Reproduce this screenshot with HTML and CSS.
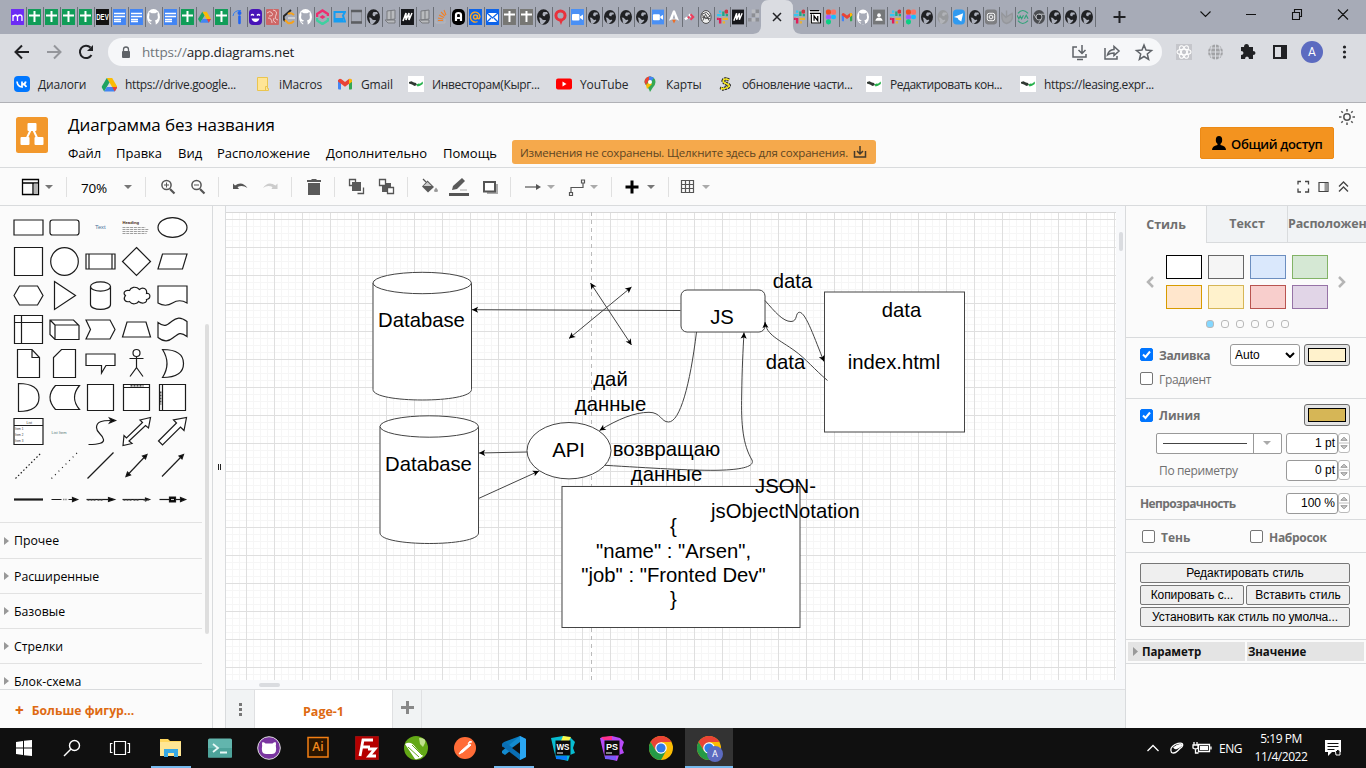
FILE: index.html
```html
<!DOCTYPE html>
<html lang="ru">
<head>
<meta charset="utf-8">
<title>Диаграмма без названия</title>
<link rel="stylesheet" href="styles.css">
</head>
<body>
<svg class="defs" width="0" height="0">
  <defs>
    <symbol id="m" viewBox="0 0 13 16"><rect width="13" height="16" fill="#6c2bf5"/><path d="M2 12V6M2 8q1-2 2.500-2t2 2v4M6.500 8q.5-2 2.500-2t2 2v4" fill="none" stroke="#fff" stroke-width="1.300"/></symbol>
    <symbol id="sheet" viewBox="0 0 13 16"><rect width="13" height="16" fill="#109d58"/><path d="M6.500 2v11M1 6.500h11" stroke="#fff" stroke-width="2"/></symbol>
    <symbol id="gsheet" viewBox="0 0 13 16"><rect width="13" height="16" fill="#777774"/><path d="M6.500 2v11M1 5.500h11" stroke="#fff" stroke-width="2"/></symbol>
    <symbol id="dev" viewBox="0 0 13 16"><rect width="13" height="16" fill="#111"/><text x="6.500" y="11.500" text-anchor="middle" font-family="Liberation Sans" font-size="9" font-weight="bold" fill="#fff" textLength="12.500" lengthAdjust="spacingAndGlyphs">DEV</text></symbol>
    <symbol id="doc" viewBox="0 0 13 16"><rect width="13" height="16" fill="#4285f4"/><path d="M1 4.500h11M1 7.500h11M1 10.500h7M1 12.500h7" stroke="#fff" stroke-width="1.300"/></symbol>
    <symbol id="gh" viewBox="0 0 13 16"><ellipse cx="6.500" cy="8" rx="6.500" ry="8" fill="#fff"/><path d="M2.500 3l2.200 1.200h3.600L10.500 3q.6 1.500 0 2.700 1.500 5-2.500 5.800.8.800.8 4.500H4.200v-2q-1.700 0-2.200-2 1.500 1 2.400.3l.6-.8Q1 10.700 2.500 5.700 2 4.500 2.500 3z" fill="#a7abb7"/></symbol>
    <symbol id="drive" viewBox="0 0 16 16"><path d="M5.300 1.500h5.400L16 10.500h-5.300z" fill="#fbbc04"/><path d="M5.300 1.500L0 10.500l2.700 4.500L8 6z" fill="#1ea362"/><path d="M5.400 10.500H16L13.300 15H2.700z" fill="#4285f4"/><path d="M10.700 10.500H16L13.300 15z" fill="#ea4335"/></symbol>
    <symbol id="ipin" viewBox="0 0 13 16"><path d="M1 7Q2 1 9 1.500" stroke="#2f7cf0" fill="none"/><circle cx="7.500" cy="4" r="2" fill="#2164f3"/><path d="M7.500 7.500V14" stroke="#2164f3" stroke-width="2.600" stroke-linecap="round"/></symbol>
    <symbol id="purple" viewBox="0 0 13 16"><rect width="13" height="16" rx="4" fill="#4713b8"/><path d="M2 6.500q1.200-2 3 0M8 6.500q1.500-2 3 0" stroke="#fff" stroke-width="1.300" fill="none"/><path d="M2.500 9.500h8q-1 3.500-4 3.500t-4-3.500z" fill="#fff"/></symbol>
    <symbol id="swirl" viewBox="0 0 13 16"><rect width="13" height="16" rx="1" fill="#ce6666"/><path d="M1 4q3-3 5 0t-3 3M7 1q5 1 3 5t2 5M2 9q4 0 4 5M8 9q-2 3 2 5" stroke="#efcaca" fill="none"/></symbol>
    <symbol id="leet" viewBox="0 0 13 16"><path d="M8 1L1 7q-1 3 1 5" stroke="#252525" stroke-width="2" fill="none"/><path d="M5 5q3-2 6 1M2 11l3 3q3 1 6-2" stroke="#f7a21b" stroke-width="2" fill="none"/><path d="M5 9h7" stroke="#ddd" stroke-width="1.500"/></symbol>
    <symbol id="hex" viewBox="0 0 13 16"><path d="M1 8V5l5.500-3.500L12 5v2" stroke="#ee2d6f" stroke-width="2.500" fill="none"/><path d="M1 9v2.500L6.500 15l5.500-3.500V9" stroke="#3fd0a0" stroke-width="2.500" fill="none"/><path d="M3.500 8L6.500 6l3 2-3 2z" fill="#ee2d6f"/></symbol>
    <symbol id="blue" viewBox="0 0 13 16"><path d="M1.500 3H12l-2 3.500 2 6H1.500z" fill="none" stroke="#159df2" stroke-width="2"/><path d="M1 9h9v4H1z" fill="#159df2"/></symbol>
    <symbol id="gbox" viewBox="0 0 13 16"><path d="M1.500 3v10h10V3" fill="none" stroke="#84868c"/><path d="M1 2h11M1 13.500h11" stroke="#5c5e62" stroke-width="2.500"/></symbol>
    <symbol id="globe" viewBox="0 0 13 16"><ellipse cx="6.500" cy="8" rx="6.500" ry="7.700" fill="#202124"/><path d="M1.500 8.500q3 0 3.500 1.500t3 1-1 3-4-1-1.500-4.500zM6.500 3h3.500l1 2-2.500.5-.5 1.700L6 7 5.500 5z" fill="#abafba"/></symbol>
    <symbol id="gglobe" viewBox="0 0 13 16"><ellipse cx="6.500" cy="8" rx="6" ry="7.500" fill="#989a9d"/><path d="M1.500 8.500q3 0 3.500 1.500t3 1-1 3-4-1-1.500-4.500zM6.500 3h3.500l1 2-2.500.5-.5 1.700L6 7 5.500 5z" fill="#b1b3b8"/></symbol>
    <symbol id="book" viewBox="0 0 13 16"><path d="M3 2l8-1v9l-8 1zM1 11h10v3H4z" fill="#b9bbbe" stroke="#77797e"/><path d="M7 2v8" stroke="#77797e"/></symbol>
    <symbol id="bm" viewBox="0 0 13 16"><rect width="13" height="16" fill="#16171b"/><path d="M2 12L5 4v7l3-7v7l3-7" stroke="#fff" stroke-width="1.500" fill="none"/></symbol>
    <symbol id="stack" viewBox="0 0 13 16"><path d="M1 10v4h9v-4" stroke="#b8b8bc" fill="none"/><path d="M3 11.500h5M3 9l5 1M4 6l5 2.500M6 3l4 4M9 1l2 5" stroke="#f48024" stroke-width="1.100"/></symbol>
    <symbol id="blacka" viewBox="0 0 13 16"><rect width="13" height="16" rx="5" fill="#000"/><path d="M4 12V6q0-2 2.500-2T9 6v6M4 9h5" stroke="#fff" stroke-width="2.200" fill="none"/></symbol>
    <symbol id="at" viewBox="0 0 13 16"><rect width="13" height="16" fill="#0c63ea"/><circle cx="6.500" cy="8" r="2" fill="none" stroke="#f9a825" stroke-width="1.400"/><path d="M8.500 6v3q2 2 2.500-1.500A4.800 5 0 1 0 8.500 12.500" fill="none" stroke="#f9a825" stroke-width="1.400"/></symbol>
    <symbol id="mail" viewBox="0 0 13 16"><rect width="13" height="16" fill="#0c63ea"/><rect x="1" y="4" width="11" height="9" fill="#fff"/><path d="M1 4l5.500 5L12 4M1 13l4-4M12 13L8 9" stroke="#0c63ea" stroke-width="1.300" fill="none"/></symbol>
    <symbol id="rpin" viewBox="0 0 13 16"><path d="M5 11L7 16l2-5" fill="#e8323c"/><circle cx="6.500" cy="6.500" r="4.600" fill="none" stroke="#e8323c" stroke-width="3"/></symbol>
    <symbol id="zoom" viewBox="0 0 13 16"><rect width="13" height="16" fill="#4a90f5"/><rect x="1" y="5" width="7.500" height="6.500" rx="1" fill="#fff"/><path d="M9 7.500L12 5.500v5.500L9 9z" fill="#fff"/></symbol>
    <symbol id="rocket" viewBox="0 0 13 16"><path d="M5.500 1h2L12 12q-5-3-11 0z" fill="#fff"/><path d="M4.500 11h4L6.500 15z" fill="#ef6b22"/><path d="M6.500 5L5 10h3z" fill="#a7abb7"/></symbol>
    <symbol id="rdots" viewBox="0 0 13 16"><path d="M1 10.500l3-2M5.500 5l2 2" stroke="#fff" stroke-width="2.500"/><path d="M4 9l2-1M7 5l3 3-3 3" stroke="#ef3b5b" stroke-width="2.200" fill="none"/></symbol>
    <symbol id="knot" viewBox="0 0 13 16"><ellipse cx="6.500" cy="8" rx="5.500" ry="7" fill="#eee" stroke="#444"/><path d="M2 5l5-2 4 4-5 3zM3 12l3-7 4 7M2 8l9 2" stroke="#444" fill="none"/></symbol>
    <symbol id="slack" viewBox="0 0 13 16"><path d="M4.500 1v2.500M1 6h5" stroke="#36c5f0" stroke-width="2.600"/><path d="M8 2v5M10.500 6H13" stroke="#20a883" stroke-width="2.600"/><path d="M4.500 9v6M1 10h2" stroke="#e01e5a" stroke-width="2.600"/><path d="M7 10h6M8.500 12.500V15" stroke="#ecb22e" stroke-width="2.600"/><circle cx="11.300" cy="2.200" r="2.200" fill="#cf3640"/></symbol>
    <symbol id="gray4" viewBox="0 0 13 16"><path d="M4 4h4v4H4zM8 0h4v4H8zM0 9h4v4H0zM8 9h4v4H8z" fill="#8d8f94"/><path d="M8 4h4v4H8zM4 9h4v4H4zM4 0h4v4H4z" fill="#b9bbc0"/></symbol>
    <symbol id="notion" viewBox="0 0 13 16"><path d="M0 1h11l2 2v12H1z" fill="#fff"/><path d="M1 4h12M1 1h10M2.500 5v9.500h10V4.500M5.500 12V7l4 5V7" stroke="#000" stroke-width="1.300" fill="none"/></symbol>
    <symbol id="figma" viewBox="0 0 13 16"><rect x="1" y="0" width="5.500" height="5.500" rx="2" fill="#f24e1e"/><rect x="6.500" y="0" width="5.500" height="5.500" rx="2" fill="#ff7262"/><rect x="1" y="5.500" width="5.500" height="5" rx="2" fill="#a259ff"/><rect x="6.500" y="5.500" width="5.500" height="5" rx="2.500" fill="#1abcfe"/><rect x="1" y="10.500" width="5.500" height="5.500" rx="2.500" fill="#0acf83"/></symbol>
    <symbol id="gmail" viewBox="0 0 16 16"><path d="M1 4h3v9.500H2q-1 0-1-1z" fill="#4285f4"/><path d="M12 4h3v8.500q0 1-1 1h-2z" fill="#34a853"/><path d="M1 4.500Q2 2 4.500 3.200L8 6l3.500-2.800Q14 2 15 4.500V5.500L8 10.800 1 5.500z" fill="#ea4335"/><path d="M12 3q2.500-.7 3 1.500v1.200l-3 2.300z" fill="#fbbc04"/></symbol>
    <symbol id="person" viewBox="0 0 13 16"><rect width="13" height="16" fill="#757779"/><circle cx="6.500" cy="6" r="2" fill="#fff"/><path d="M2.500 12q1-3.500 4-3.500t4 3.500z" fill="#fff"/></symbol>
    <symbol id="tg" viewBox="0 0 13 16"><rect width="13" height="16" rx="4" fill="#2f9af0"/><path d="M1 8l10-4-2 9-3-2-1-2z" fill="#fff"/></symbol>
    <symbol id="insta" viewBox="0 0 13 16"><rect width="13" height="16" rx="3" fill="#7e7f82"/><rect x="2.500" y="4" width="8" height="8" rx="2" fill="none" stroke="#fff"/><circle cx="6.500" cy="8" r="2" fill="none" stroke="#fff"/></symbol>
    <symbol id="gswirl" viewBox="0 0 13 16"><path d="M6 1v7l6-4q2 9-6 11Q0 14 1 4l5 5" stroke="#95979c" stroke-width="1.500" fill="#a1a3a8"/></symbol>
    <symbol id="wa" viewBox="0 0 13 16"><path d="M1 4Q6-2 12 4M1 12q5 6 11 0M0 6l2 4 1.500-3L5 10l2-4M8 10l2-4 2 4" fill="none" stroke="#32a279" stroke-width="1.200"/></symbol>
    <symbol id="dchrome" viewBox="0 0 13 16"><ellipse cx="6.500" cy="8" rx="6.500" ry="7.500" fill="#4b4d51"/><circle cx="6.500" cy="8" r="3.200" fill="#303236" stroke="#bdbfc3"/><path d="M6.500 5H13M4 10L1 5M9 10l-3 5" stroke="#bdbfc3"/></symbol>
    <symbol id="chev" viewBox="0 0 8 8"><path d="M0 2h8L4 6z"/></symbol>
    <symbol id="leaf" viewBox="0 0 16 16"><rect width="16" height="16" fill="#fff"/><path d="M1 6l2.500-.8L6 6.500 8 7l1 2-2.500 1L4 8.500 1 7.500z" fill="#303833"/><path d="M8.500 8.500l2-1 1.500.3L14.800 5.500V8L12 9.800l-2.500.7z" fill="#25b14b"/></symbol>
    <symbol id="chrome" viewBox="-12 -12 24 24"><circle r="12" fill="#fbbc04"/><path d="M-10.400-6A12 12 0 0 1 10.400-6H0L-5 3z" fill="#ea4335"/><path d="M-10.400-6A12 12 0 0 0 0 12L5 3-5 3z" fill="#259a46"/><circle r="5.800" fill="#fff"/><circle r="4.600" fill="#317be8"/></symbol>
    <marker id="end" viewBox="-8 -4 9 8" markerWidth="8" markerHeight="7" markerUnits="userSpaceOnUse" refX="0" refY="0" orient="auto-start-reverse"><path d="M0 0L-7-3.500-5.300 0-7 3.500z"/></marker>
    <pattern id="grid" width="28" height="28" patternUnits="userSpaceOnUse" x="20" y="7">
      <path d="M7.500 0v28M14.500 0v28M21.500 0v28M0 7.500h28M0 14.500h28M0 21.500h28" stroke="#f6f6f6"/>
      <path d="M.5 0v28M0 .5h28" stroke="#dfdfdf"/>
    </pattern>
  </defs>
</svg>

<header class="browser">
  <div class="tabstrip">
    <div class="tabs tabs-a">
      <svg><use href="#m"/></svg><svg><use href="#sheet"/></svg><svg><use href="#sheet"/></svg><svg><use href="#sheet"/></svg><svg><use href="#sheet"/></svg><svg><use href="#dev"/></svg><svg><use href="#doc"/></svg><svg><use href="#doc"/></svg><svg><use href="#gh"/></svg><svg><use href="#doc"/></svg><svg><use href="#sheet"/></svg><svg><use href="#drive"/></svg><svg><use href="#sheet"/></svg><svg><use href="#ipin"/></svg><svg><use href="#purple"/></svg><svg><use href="#swirl"/></svg><svg><use href="#leet"/></svg><svg><use href="#gh"/></svg><svg><use href="#hex"/></svg><svg><use href="#blue"/></svg><svg><use href="#gbox"/></svg><svg><use href="#globe"/></svg><svg><use href="#book"/></svg><svg><use href="#bm"/></svg><svg><use href="#book"/></svg><svg><use href="#stack"/></svg><svg><use href="#blacka"/></svg><svg><use href="#at"/></svg><svg><use href="#mail"/></svg><svg><use href="#gsheet"/></svg><svg><use href="#gsheet"/></svg><svg><use href="#globe"/></svg><svg><use href="#rpin"/></svg><svg><use href="#zoom"/></svg>
    </div>
    <div class="tabs tabs-b">
      <svg><use href="#globe"/></svg><svg><use href="#globe"/></svg><svg><use href="#globe"/></svg><svg><use href="#globe"/></svg><svg><use href="#zoom"/></svg><svg><use href="#rocket"/></svg><svg><use href="#rdots"/></svg><svg><use href="#knot"/></svg><svg><use href="#slack"/></svg><svg><use href="#bm"/></svg><svg class="last"><use href="#gray4"/></svg>
    </div>
    <svg class="active-tab" width="48" height="34"><path d="M0 34q8-1 8-8V8q0-8 8-8h16q8 0 8 8v18q0 7 8 8z" fill="#dadce1"/><path d="M20 13l8 8M28 13l-8 8" stroke="#202124" stroke-width="1.500"/></svg>
    <div class="tabs tabs-c">
      <svg><use href="#slack"/></svg><svg><use href="#notion"/></svg><svg><use href="#figma"/></svg><svg><use href="#gmail"/></svg><svg><use href="#gh"/></svg><svg><use href="#person"/></svg><svg><use href="#slack"/></svg><svg><use href="#figma"/></svg><svg><use href="#globe"/></svg><svg><use href="#gglobe"/></svg><svg><use href="#tg"/></svg><svg><use href="#globe"/></svg><svg><use href="#insta"/></svg><svg><use href="#gswirl"/></svg><svg><use href="#wa"/></svg><svg><use href="#dchrome"/></svg><svg><use href="#globe"/></svg><svg><use href="#globe"/></svg><svg><use href="#globe"/></svg>
    </div>
    <svg class="window-buttons" width="254" height="34" fill="none" stroke="#111">
      <path d="M1.500 17h12M7.500 11v12" stroke="#202124" stroke-width="2"/>
      <path d="M88.500 11.500l5 5 5-5M134 14.500h10M180.500 12.500h7v7h-7zM182.500 12v-2.500h7v7H188M226 9.500l10 10M236 9.500l-10 10" stroke-width="1.100"/>
    </svg>
  </div>
  <div class="addressbar">
    <svg width="108" height="36" fill="none" stroke="#202124" stroke-width="2"><path d="M29 18H16M22 11.500L15.500 18l6.500 6.500"/><path d="M47 18h13M54 11.500l6.500 6.500-6.500 6.500" stroke="#94969b"/><path d="M91.500 21a6.200 6.200 0 1 1-1-7.500"/><path d="M93 11v6h-6z" fill="#202124" stroke="none"/></svg>
    <div class="omnibox">
      <svg width="10" height="13"><rect x="1" y="5" width="8" height="7" rx="1" fill="#5f6368"/><path d="M2.500 6V3.500a2.500 2.500 0 0 1 5 0V6" fill="none" stroke="#5f6368" stroke-width="1.300"/></svg>
      <span class="url"><i>https://</i>app.diagrams.net</span>
      <svg class="omni-icons" width="84" height="20" fill="none" stroke="#5f6368" stroke-width="1.500"><path d="M6 5H2v10h13v-3M6 17.500h6M11 3v8M7.500 8L11 11.500 14.500 8"/><path d="M34 6v11h12v-3M36.500 13q1-5 6.500-5.500V4.500L48 9l-5 4.500V11q-4 0-6.500 2z"/><path d="M73 3l2 5 5.500.500-4.200 3.500 1.300 5.300L73 14.500l-4.600 2.800 1.300-5.300L65.500 8.500 71 8z"/></svg>
    </div>
    <svg width="194" height="36"><rect x="4" y="10" width="16" height="16" fill="#c5c6cb"/><g fill="none" stroke="#fff" stroke-width="1.100"><ellipse cx="12" cy="18" rx="7" ry="2.700"/><ellipse cx="12" cy="18" rx="7" ry="2.700" transform="rotate(60 12 18)"/><ellipse cx="12" cy="18" rx="7" ry="2.700" transform="rotate(120 12 18)"/></g><circle cx="43.500" cy="18" r="7.500" fill="#a2a3a6"/><path d="M36 18h15M37 14h13M37 22h13M43.500 10v16M40 11q-3 7 0 14M47 11q3 7 0 14" stroke="#dadce1" fill="none"/><path d="M69 13h3q0-3 2.500-3t2.500 3h4v4q2.500 0 2.500 2T81 21v4h-4q0-2.500-2-2.500T73 25h-4v-4q2.500 0 2.500-2T69 17z" fill="#202124"/><path d="M102 12h12v12h-12z" fill="none" stroke="#202124" stroke-width="2"/><path d="M109 12h5v12h-5z" fill="#202124"/><circle cx="140" cy="18" r="11" fill="#5c6bc0"/><text x="140" y="22.200" text-anchor="middle" font-family="Roboto" font-size="12" fill="#fff">A</text><g fill="#202124"><circle cx="172.500" cy="13" r="1.600"/><circle cx="172.500" cy="18" r="1.600"/><circle cx="172.500" cy="23" r="1.600"/></g></svg>
  </div>
  <nav class="bookmarks">
    <a class="b1"><svg viewBox="0 0 16 16"><rect width="16" height="16" rx="4" fill="#0077ff"/><path d="M3 5.500q.5 5 5 5.500V5.500M8.300 8.500q3-.5 3.500-3M8.300 8.200q3 .3 4 2.800" fill="none" stroke="#fff" stroke-width="1.700"/></svg><span>Диалоги</span></a>
    <a class="b2"><svg viewBox="-.5 -.5 17 17"><use href="#drive"/></svg><span>https://drive.google...</span></a>
    <a class="b3"><svg viewBox="0 0 16 16"><path d="M2.500 1.500h10v11h1v2h-11z" fill="#ffe596" stroke="#eac54f"/><path d="M10.500 14v-3.500h2" stroke="#eac54f" fill="none"/></svg><span>iMacros</span></a>
    <a class="b4"><svg><use href="#gmail"/></svg><span>Gmail</span></a>
    <a class="b5"><svg><use href="#leaf"/></svg><span>Инвесторам(Кырг...</span></a>
    <a class="b6"><svg viewBox="0 0 16 16"><rect y="2.500" width="16" height="11" rx="2" fill="#f00"/><path d="M6.500 5.500v5l4-2.500z" fill="#fff"/></svg><span>YouTube</span></a>
    <a class="b7"><svg viewBox="0 0 16 16"><path d="M2.500 6a5.500 5.500 0 0 1 11 0q0 3-3 6L8 16q-.5-2-2.500-5-3-3-3-5z" fill="#34a853"/><path d="M2.500 6A5.500 5.500 0 0 1 9 .5L4 9q-1.500-2-1.500-3z" fill="#ea4335"/><path d="M7 .5q3-.5 5 1.500L7 8z" fill="#4285f4"/><path d="M4 9l3-3 3 2-5 5z" fill="#fbbc04"/><circle cx="8" cy="6" r="2" fill="#fff"/></svg><span>Карты</span></a>
    <a class="b8"><svg viewBox="0 0 16 16"><path d="M11 4Q7 2 5.500 4t3.500 4-1 4-4-.5" fill="none" stroke="#222" stroke-width="3.600" stroke-dasharray="2 .6"/><path d="M11 4Q7 2 5.500 4t3.500 4-1 4-4-.5" fill="none" stroke="#f6e81c" stroke-width="1.600"/></svg><span>обновление части...</span></a>
    <a class="b9"><svg><use href="#leaf"/></svg><span>Редактировать кон...</span></a>
    <a class="b10"><svg><use href="#leaf"/></svg><span>https://leasing.expr...</span></a>
  </nav>
</header>

<div class="app-header">
  <svg class="logo" width="32" height="36"><rect width="32" height="36" rx="2.500" fill="#f2982c"/><path d="M16 10L9 25M16 10l7 15" stroke="#fff" stroke-width="2"/><g fill="#fff"><rect x="11.500" y="6" width="9" height="8" rx="1"/><rect x="4.500" y="20" width="9" height="8" rx="1"/><rect x="18.500" y="20" width="9" height="8" rx="1"/></g></svg>
  <div class="heading">
    <div class="title">Диаграмма без названия</div>
    <div class="menu">
      <span class="m1">Файл</span><span class="m2">Правка</span><span class="m3">Вид</span><span class="m4">Расположение</span><span class="m5">Дополнительно</span><span class="m6">Помощь</span>
      <div class="status"><span>Изменения не сохранены. Щелкните здесь для сохранения.</span><svg width="14" height="14" fill="none" stroke="#443a2b" stroke-width="1.500"><path d="M1.500 6v6h11V6M7 1v8M4 6l3 3 3-3"/></svg></div>
    </div>
  </div>
  <button class="share"><svg width="14" height="14"><ellipse cx="7" cy="4" rx="3.200" ry="4"/><path d="M5.500 6h3v3q5.500 1 5.500 5H0q0-4 5.500-5z"/></svg><span>Общий доступ</span></button>
  <svg class="sun" width="18" height="18" fill="none" stroke="#555" stroke-width="1.500"><circle cx="9" cy="9" r="3.200"/><path d="M9 1v2.500M9 14.500V17M1 9h2.500M14.500 9H17M3.300 3.300l1.500 1.500M13.200 13.200l1.500 1.500M14.700 3.300l-1.500 1.500M4.800 13.200l-1.500 1.500"/></svg>
</div>

<div class="toolbar">
  <div class="group g1"><svg class="ic" viewBox="-15 -15 30 30"><path d="M-7.500-7.500h16v15h-16zM-7.500-4h16M3-4V7.500" fill="none" stroke="#000" stroke-width="1.300"/><path d="M4-3.300h4V7H4z" fill="#b5b5b5"/></svg><svg class="caret"><use href="#chev"/></svg></div>
  <div class="group g2"><span>70%</span><svg class="caret"><use href="#chev"/></svg></div>
  <div class="group g3">
    <svg class="ic" viewBox="-15 -15 30 30" fill="none" stroke="#555" stroke-width="1.500"><circle cx="-1.500" cy="-2" r="4.600"/><path d="M2 2l4.500 4.500" stroke-width="2.200"/><path d="M-4-2h5M-1.500-4.500v5" stroke-width="1"/></svg>
    <svg class="ic" viewBox="-15 -15 30 30" fill="none" stroke="#555" stroke-width="1.500"><circle cx="-1.500" cy="-2" r="4.600"/><path d="M2 2l4.500 4.500" stroke-width="2.200"/><path d="M-4-2h5" stroke-width="1"/></svg>
  </div>
  <div class="group g4">
    <svg class="ic" viewBox="-15 -15 30 30"><path d="M-7-3.500l2 2q7-5 12.500 2.500-5-3.500-10-1L-1 2h-6z" fill="#555"/></svg>
    <svg class="ic" viewBox="-15 -15 30 30"><path d="M7.500-3.500l-2 2Q-2-6.500-7 1q4.500-3.500 9.500-1L1.500 2h6z" fill="#ccc"/></svg>
  </div>
  <div class="group g5"><svg class="ic" viewBox="-15 -15 30 30" fill="#5a5a5a"><path d="M-7-7h4l1-1h4l1 1h4v2H-7zM-6-4H6V8H-6z"/></svg></div>
  <div class="group g6">
    <svg class="ic" viewBox="-15 -15 30 30"><path d="M-6.500-7.500h6v6h-6zM1.500 6.500h6v-6" fill="none" stroke="#555" stroke-width="1.300"/><rect x="-4" y="-5" width="9" height="9" fill="#5a5a5a"/></svg>
    <svg class="ic" viewBox="-15 -15 30 30"><rect x="-4" y="-4" width="9" height="9" fill="#5a5a5a"/><path d="M-6.500-7.500h6v6h-6zM1.500.5h6v6h-6z" fill="#fff" stroke="#555" stroke-width="1.300"/></svg>
  </div>
  <div class="group g7">
    <svg class="ic" viewBox="-15 -15 30 30"><path d="M-6-8l3 3" stroke="#555" stroke-width="1.300"/><path d="M-1.500-6.500L5 0-1 5.500-7-.5z" fill="#5a5a5a"/><path d="M-1.500-5L-5.500-1h8z" fill="#ccc"/><path d="M7 .5q4 4.500 0 4.500t0-4.500z" fill="#999"/></svg>
    <svg class="ic" viewBox="-15 -15 30 30"><path d="M-7 3l1-4L3-9l3 3-8 8z" fill="#5a5a5a"/><path d="M1 3h7" stroke="#aaa"/><rect x="-10" y="6" width="20" height="3" fill="#555"/></svg>
    <svg class="ic" viewBox="-15 -15 30 30"><rect x="-2" y="-3" width="11" height="10" fill="#aaa"/><rect x="-5" y="-5" width="11" height="9.500" fill="#fff" stroke="#555" stroke-width="2"/></svg>
  </div>
  <div class="group g8">
    <svg class="ic" viewBox="-15 -15 30 30"><path d="M-7 0H6" stroke="#555" stroke-width="1.200"/><path d="M4-3l5 3-5 3z" fill="#555"/></svg><svg class="caret light"><use href="#chev"/></svg>
    <svg class="ic" viewBox="-15 -15 30 30" fill="none" stroke="#555" stroke-width="1.200"><path d="M-6 5V.5H6V-4M-7.500 5.500h3v3h-3zM4.500-7h3v3h-3z"/></svg><svg class="caret light"><use href="#chev"/></svg>
  </div>
  <div class="group g9"><svg class="ic" viewBox="-15 -15 30 30"><path d="M-6.500 0h13M0-6.500v13" stroke="#000" stroke-width="3"/></svg><svg class="caret dark"><use href="#chev"/></svg></div>
  <div class="group g10"><svg class="ic" viewBox="-15 -15 30 30"><path d="M-5.500-6.500h12v12h-12zM-1.500-6.500v12M2.500-6.500v12M-5.500-2.500h12M-5.500 1.500h12" fill="none" stroke="#555" stroke-width="1.200"/></svg><svg class="caret light"><use href="#chev"/></svg></div>
  <svg class="view-icons" width="60" height="20" fill="none" stroke="#444" stroke-width="1.300"><path d="M5 7.500V4.500H8M12 4.500h3.500v3M15.500 11.500v3.500H12M8 15H5v-3.500"/><path d="M26 5.500h9v9h-9z" stroke-width="1.200"/><path d="M31.500 6h3v8h-3z" fill="#999" stroke="none"/><path d="M46 9.500L50.500 5 55 9.500M46 14.500l4.500-4.500 4.500 4.500"/></svg>
</div>

<main class="workspace">
  <aside class="sidebar">
    <div class="sidebar-scroll">
      <div class="palette">
        <svg><path d="M-14.500-7.500h29v15h-29z"/></svg>
        <svg><rect x="-14.500" y="-7.500" width="29" height="15" rx="2.500"/></svg>
        <svg><text x="-5.500" y="1.500" font-size="5.800" stroke="none" fill="#47709a">Text</text></svg>
        <svg><text x="-14" y="-3.500" font-size="4.200" font-weight="bold" stroke="none" fill="#421">Heading</text><path d="M-14 0H9M-14 2H12M-14 4H11M-14 6H10" stroke="#888" stroke-width=".8" stroke-dasharray="3 .8"/></svg>
        <svg><ellipse rx="14.500" ry="9.800"/></svg>
        <svg><path d="M-14-14h28v28h-28z"/></svg>
        <svg><circle r="13.800"/></svg>
        <svg><path d="M-14.500-7.500h29v15h-29zM-11.500-7.500v15M11.500-7.500v15"/></svg>
        <svg><path d="M0-14L14 0 0 14-14 0z"/></svg>
        <svg><path d="M-10-7.500h24.500L10 7.500h-24.500z"/></svg>
        <svg><path d="M-14.500 0L-9-9.500H9L14.500 0 9 9.500H-9z"/></svg>
        <svg><path d="M-10-14L11 0-10 14z"/></svg>
        <svg><path d="M-10-9V9C-10 15.500 10 15.500 10 9V-9"/><ellipse cy="-9" rx="10" ry="4.700"/></svg>
        <svg><path d="M-7-5C-12-6-14-2-11 0c-3 4 0 7 4 6 3 4 8 2 9 0 4 3 9 1 8-2 5-1 4-7 0-6C11-7 6-9 3-6-1-10-6-8-7-5z"/></svg>
        <svg><path d="M-14.500-9.500h29v17Q7 3 0 7.500T-14.500 7.500z"/></svg>
        <svg><path d="M-14-14h28v28h-28zM-7-14v28M-14-7h28"/></svg>
        <svg><path d="M-14.500-9.500H9l5.500 5.500v14h-24l-5-5zM-9.500 10V-4.500h24M-14.500-9.500l5 5"/></svg>
        <svg><path d="M-14.500-9.500H9.500L14.500 0 9.500 9.500h-24L-10 0z"/></svg>
        <svg><path d="M-9.500-7.500H9.500L14 7.500h-28z"/></svg>
        <svg><path d="M-14.500-7C-8-2-6-4-1-8S8-13 14.500-8V7C8 2 6 4 1 8S-8 13-14.500 8z"/></svg>
        <svg><path d="M-11-14H3.500L11-6v20h-22zM3.500-14v8H11"/></svg>
        <svg><path d="M-3-14h14v28h-22V-6z"/></svg>
        <svg><path d="M-14.500-9.500h29V2h-9L1 9.500V2h-15.500z"/></svg>
        <svg><circle cy="-10.500" r="3.500"/><path d="M0-7V4l-6.500 9M0 4l6.500 9M-7-5H7"/></svg>
        <svg><path d="M-10-14Q11-14 11 0T-10 14Q-1 0-10-14z"/></svg>
        <svg><path d="M-10-14Q10.500-14 10.500 0T-10 14z"/></svg>
        <svg><path d="M-9-12h24Q5 0 15 12H-9Q-20 0-9-12z"/></svg>
        <svg><path d="M-13-13h26v26h-26z"/></svg>
        <svg><path d="M-13-13h26v26h-26zM-13-10h26"/><path d="M-6-11.700H7" stroke-dasharray="2 1"/></svg>
        <svg><path d="M-13-13h26v26h-26zM-10-13v26"/><path d="M-11.700-6V7" stroke-dasharray="2 1"/></svg>
        <svg><path d="M-14.500-13h29v26h-29zM-14.500-6h29"/><text x="-2" y="-8" font-size="3.500" stroke="none" fill="#333">List</text><g font-size="3" stroke="none" fill="#333"><text x="-13.500" y="-2">Item 1</text><text x="-13.500" y="4">Item 2</text><text x="-13.500" y="10">Item 3</text></g></svg>
        <svg><text x="-13" y="2" font-size="4" stroke="none" fill="#577">List Item</text></svg>
        <svg><path d="M-12 13q16 0 15-5c-1-6-7-6-7-12 0-6 6-7 14-7"/><path d="M9-13.500l6 2.500-6 2.500 1.500-2.500z" fill="#000"/></svg>
        <svg><path d="M-13.500 14l1-10 2.500 2.500L6-9 3.500-11.500 14-14l-2 10.500-3-2.500L-7.500 9.500l3 2.500z"/></svg>
        <svg><path d="M-14 9.500L4-8.500 1-11.500 14-14l-2.500 13-3.500-3.500-18 18z"/></svg>
        <svg><path d="M-13 13L13-13" stroke-dasharray="1.500 2.200"/></svg>
        <svg><path d="M-13 13L13-13" stroke-dasharray="1 4"/></svg>
        <svg><path d="M-13 13L13-13"/></svg>
        <svg><path d="M-8.500 9L8.500-9"/><path d="M-10.500 11l1.500-4.500 3 3zM10.500-11l-4.500 1.500 3 3z" fill="#000"/></svg>
        <svg><path d="M-10.500 11L9-9"/><path d="M11-11l-4.500 1.500 3 3z" fill="#000"/></svg>
        <svg><path d="M-14.500 0h29" stroke-width="2.200"/></svg>
        <svg><path d="M-13 0h10M4 0h6"/><path d="M8-2l5 2-5 2z" fill="#000"/><path d="M-1.500 0H3" stroke="#888" stroke-width="1.500" stroke-dasharray="1.500 .7"/></svg>
        <svg><path d="M-14 0H9"/><path d="M8-2l6 2-6 2z" fill="#000"/><path d="M-13 .8h8M-3 .8H3" stroke="#777" stroke-dasharray="2 1"/></svg>
        <svg><path d="M-14 0H12"/><path d="M9-1.500l4 1.500-4 1.500z" fill="#000"/><path d="M-13 .8h8M-3 .8H3M7 .8h6" stroke="#777" stroke-dasharray="2 1"/></svg>
        <svg><path d="M-13 0H9"/><path d="M8-2l5 2-5 2zM-3-2.500h6v5h-6z" fill="#000"/><path d="M-1.500 0H1.500" stroke="#ccc"/></svg>
      </div>
      <div class="section s1"><svg><path d="M0 0l5 4-5 4z"/></svg>Прочее</div>
      <div class="section"><svg><path d="M0 0l5 4-5 4z"/></svg>Расширенные</div>
      <div class="section"><svg><path d="M0 0l5 4-5 4z"/></svg>Базовые</div>
      <div class="section"><svg><path d="M0 0l5 4-5 4z"/></svg>Стрелки</div>
      <div class="section"><svg><path d="M0 0l5 4-5 4z"/></svg>Блок-схема</div>
      <div class="side-thumb"></div>
    </div>
    <div class="more-shapes"><b>+</b><span>Больше фигур...</span></div>
  </aside>
  <div class="splitter"><i></i><i></i></div>

  <section class="editor">
    <div class="canvas">
      <svg class="diagram" width="890" height="468" viewBox="0 0 890 468">
        <rect width="890" height="468" fill="#fff"/>
        <rect width="890" height="468" fill="url(#grid)"/>
        <path d="M0 .5h890" stroke="#d8d8d8"/>
        <path d="M365.500 0v468" stroke="#bbb" stroke-dasharray="4 4"/>
        <g transform="translate(-226 -212)" fill="#fff" stroke="#444" stroke-width="1">
          <path d="M373 283v106.500c0 14 98.500 14 98.500 0V283"/><ellipse cx="422.200" cy="283" rx="49.200" ry="10.700"/>
          <path d="M380 426.500V533c0 14 98.500 14 98.500 0V426.500"/><ellipse cx="429.200" cy="426.500" rx="49.200" ry="10.700"/>
          <rect x="681" y="290" width="84" height="42" rx="6"/>
          <rect x="824.500" y="292" width="140" height="140"/>
          <ellipse cx="569" cy="450.700" rx="42" ry="28.200"/>
          <rect x="562" y="486.500" width="238" height="141"/>
          <g fill="none">
            <path d="M680.500 310.500L472 309.700" marker-end="url(#end)"/>
            <path d="M631.500 287L569 338.500" marker-start="url(#end)" marker-end="url(#end)"/>
            <path d="M590.500 283L631.500 345" marker-start="url(#end)" marker-end="url(#end)"/>
            <path d="M527 452L479 453" marker-end="url(#end)"/>
            <path d="M478.500 498.500L539 471" marker-end="url(#end)"/>
            <path d="M696.500 332C690 385 680 422 668.500 422 661 422 661 412.300 649 412.300 635 412.300 618 419 599.500 430.500" marker-end="url(#end)"/>
            <path d="M605 465.300C650 468 690 470.500 715 470.300 740 470 755 467 752 460 743 445 741 425 741.700 395 742 370 743 350 744 332.500" marker-end="url(#end)"/>
            <path d="M765 300.500C775 312 783 321.500 791 321.500 798 321.500 795 312.300 799.500 312.300 806 312.300 815 340 824 361.500" marker-end="url(#end)"/>
            <path d="M827.500 380.500C815 370 805 358 795 351 780 340 766 335 765 322" marker-end="url(#end)"/>
          </g>
        </g>
        <g class="labels" transform="translate(-226 -212)">
          <text x="421.500" y="327">Database</text><text x="428.500" y="471">Database</text>
          <text x="610.500" y="386">дай</text><text x="610.500" y="411">данные</text>
          <text x="568.500" y="457">API</text><text x="722" y="324">JS</text>
          <text x="666.500" y="456">возвращаю</text><text x="666.500" y="481">данные</text>
          <text x="792.500" y="288">data</text><text x="785.500" y="369">data</text><text x="901.500" y="317">data</text>
          <text x="894" y="369">index.html</text>
          <text x="785.500" y="493">JSON-</text><text x="785.500" y="518">jsObjectNotation</text>
          <text x="673.500" y="533">{</text><text x="673.500" y="557.500">"name" : "Arsen",</text><text x="673.500" y="582">"job" : "Fronted Dev"</text><text x="673.500" y="606">}</text>
        </g>
      </svg>
      <div class="v-track"><i></i></div>
      <div class="h-track"><i></i></div>
    </div>
    <div class="page-tabs">
      <div class="page-menu"><i></i><i></i><i></i></div>
      <div class="page-tab">Page-1</div>
      <div class="page-add"><svg width="13" height="13"><path d="M0 6.500h13M6.500 0v13" stroke="#888" stroke-width="3"/></svg></div>
    </div>
  </section>

  <aside class="format">
    <div class="format-tabs"><b class="current">Стиль</b><b>Текст</b><b class="clip">Расположен</b></div>
    <div class="styles">
      <svg class="nav" width="8" height="12"><path d="M7 1L2 6l5 5" fill="none" stroke="#b5b5b5" stroke-width="2.500"/></svg>
      <div class="swatches"><i class="w1"></i><i class="w2"></i><i class="w3"></i><i class="w4"></i><i class="w5"></i><i class="w6"></i><i class="w7"></i><i class="w8"></i></div>
      <svg class="nav" width="8" height="12"><path d="M1 1l5 5-5 5" fill="none" stroke="#b5b5b5" stroke-width="2.500"/></svg>
    </div>
    <div class="dots"><i class="on"></i><i></i><i></i><i></i><i></i><i></i></div>
    <div class="panel fill">
      <div class="row"><span class="check on"><svg viewBox="0 0 13 13"><path d="M3 6.500l2.500 2.500L10 3.500"/></svg></span><b class="l-fill">Заливка</b><span class="select">Auto<svg width="10" height="6"><path d="M1 1l4 4 4-4" fill="none" stroke="#000" stroke-width="2"/></svg></span><span class="color yellow"><i></i></span></div>
      <div class="row second"><span class="check"></span><span class="l-grad">Градиент</span></div>
    </div>
    <div class="panel line">
      <div class="row"><span class="check on"><svg viewBox="0 0 13 13"><path d="M3 6.500l2.500 2.500L10 3.500"/></svg></span><b class="l-line">Линия</b><span class="color gold"><i></i></span></div>
      <div class="row r2"><span class="line-style"><i></i><svg class="caret light"><use href="#chev"/></svg></span><span class="num">1 pt</span><span class="spin"><svg viewBox="0 0 11 20"><use href="#spinner"/></svg></span></div>
      <div class="row r3"><span class="l-per">По периметру</span><span class="num">0 pt</span><span class="spin"><svg viewBox="0 0 11 20"><use href="#spinner"/></svg></span></div>
    </div>
    <div class="panel opacity"><div class="row"><b class="l-op">Непрозрачность</b><span class="num">100 %</span><span class="spin"><svg viewBox="0 0 11 20"><g id="spinner"><path d="M0 10h11" stroke="#bbb"/><path d="M2 7l3.500-3.500L9 7zM2 13h7l-3.500 3.500z" fill="#ccc" stroke="#777" stroke-width=".8"/></g></svg></span></div></div>
    <div class="panel effects"><span class="check"></span><b class="l-sh">Тень</b><span class="check"></span><b class="l-sk">Набросок</b></div>
    <div class="panel actions"><span class="wide a1">Редактировать стиль</span><span class="a2">Копировать с...</span><span class="a3">Вставить стиль</span><span class="wide a4">Установить как стиль по умолча...</span></div>
    <div class="props"><b><svg width="5" height="9"><path d="M0 0l5 4.500L0 9z" fill="#999"/></svg>Параметр</b><b>Значение</b></div>
  </aside>
</main>

<footer class="taskbar">
  <div class="apps">
    <div class="app sys"><svg viewBox="-12 -12 24 24" fill="#fff"><path d="M-8-6l7-1v6.500h-7zM0-7.200L8-8v7.500H0zM-8 .5h7V7l-7-1zM0 .5h8V8L0 7.200z"/></svg></div>
    <div class="app sys"><svg viewBox="-12 -12 24 24" fill="none" stroke="#fff" stroke-width="1.400"><circle cx="2.500" cy="-2.500" r="5"/><path d="M-1 1l-7 7"/></svg></div>
    <div class="app sys task"><svg viewBox="-12 -12 24 24" fill="none" stroke="#fff" stroke-width="1.200"><path d="M-5.500-6.500h11v13h-11zM-7.500-4.500h-2v9h2M7.500-4.500h2v9h-2"/></svg></div>
    <div class="app run"><svg viewBox="-12 -12 24 24"><path d="M-11-9h8l2 2h11V8h-21z" fill="#ffd75e"/><path d="M-11-6h21V8h-21z" fill="#ffe694"/><path d="M-7 9V1H7v8H3V5h-6v4z" fill="#38a9e4"/></svg></div>
    <div class="app"><svg viewBox="-12 -12 24 24"><rect x="-12" y="-9.500" width="24" height="19" rx="1.500" fill="#62b5ad"/><path d="M-12 0h24v9.500h-24z" fill="#4da39a"/><path d="M-7-4l5 4-5 4M0 4.500h7" fill="none" stroke="#e7f7f5" stroke-width="1.800"/></svg></div>
    <div class="app"><svg viewBox="-12 -12 24 24"><circle r="11.300" fill="#7a35a0" stroke="#ddd"/><path d="M-6.500-6q2 0 3 1.500h7Q4.500-6 6.500-6q1 2 .3 3.500Q8.500 6 3 6h-6q-5.500 0-3.800-8.500Q-7.500-4-6.500-6z" fill="#fff"/></svg></div>
    <div class="app"><svg viewBox="-12 -12 24 24"><rect x="-10" y="-10.500" width="20" height="19.500" fill="#2a1500" stroke="#f47f13" stroke-width="1.500"/><text y="3" text-anchor="middle" font-family="Open Sans" font-size="12" font-weight="600" fill="#f58a1e">Ai</text></svg></div>
    <div class="app"><svg viewBox="-12 -12 24 24"><rect x="-11.500" y="-11.500" width="23" height="23" fill="#b50000" stroke="#c91414" stroke-dasharray="1 1"/><path d="M-7 8L-4-8H6M-5-1h8M1 1h7L2 8h7" fill="none" stroke="#fff" stroke-width="2.800"/></svg></div>
    <div class="app"><svg viewBox="-12 -12 24 24"><circle r="12" fill="#63a816"/><path d="M-11-4Q-5-8 0 0l7 8q-4 4-8 3z" fill="#fff"/><path d="M-8-1L3 9M-4-3L6 7" stroke="#64a916"/><path d="M3-10q8 0 6 5L7-1 4-4z" fill="#bfe08c"/></svg></div>
    <div class="app"><svg viewBox="-12 -12 24 24"><circle r="11" fill="#ff6c37"/><path d="M-6 6l2-3L4-4l2 1-8 7zM3-4q1-4 4-2" fill="#fff" stroke="#fff"/></svg></div>
    <div class="app run"><svg viewBox="-12 -12 24 24"><path d="M6-12l6 3V9l-6 3L-9-4l-3 3v-3l2-2z" fill="#0879bd"/><path d="M6-12L-12 3v2l3 2L6-5z" fill="#138bd0"/><path d="M-9-6L6 5v7L-12-2v-2z" fill="#0a6fb5"/><path d="M6-12l6 3V9l-6 3z" fill="#2aa6f2"/><path d="M6-6v12L-2 0z" fill="#101010"/></svg></div>
    <div class="app"><svg viewBox="-12 -12 24 24"><path d="M-12-10L0-12 8-10l4 4-2 6 2 5-5 2-2 6-12-3-2-7z" fill="#08bdd1"/><path d="M0-12l8 1-2 4h-8z" fill="#fcf84a"/><path d="M-7 8h11v4l-11-1z" fill="#087cfa"/><rect x="-7.500" y="-7.500" width="15" height="15" fill="#0a0a0a"/><text y="1.500" text-anchor="middle" font-family="Liberation Sans" font-size="9" font-weight="bold" fill="#fff" textLength="13" lengthAdjust="spacingAndGlyphs">WS</text><path d="M-6 5h6" stroke="#fff"/></svg></div>
    <div class="app"><svg viewBox="-12 -12 24 24"><path d="M-12-10L0-12 8-10l4 4-2 6 2 5-5 2-2 6-12-3-2-7z" fill="#b74af7"/><path d="M-11-11L0-12v4h-8z" fill="#ff318c"/><path d="M-7 8h11v4l-11-1z" fill="#765af8"/><rect x="-7.500" y="-7.500" width="15" height="15" fill="#0a0a0a"/><text y="1.500" text-anchor="middle" font-family="Liberation Sans" font-size="9" font-weight="bold" fill="#fff" textLength="12" lengthAdjust="spacingAndGlyphs">PS</text><path d="M-6 5h6" stroke="#fff"/></svg></div>
    <div class="app"><svg><use href="#chrome"/></svg></div>
    <div class="app run current"><svg class="over" viewBox="-12 -12 24 24"><use href="#chrome" x="-12" y="-12" width="24" height="24"/><circle cx="6" cy="6" r="8" fill="#5c6bc0"/><text x="6" y="9.200" text-anchor="middle" font-family="Roboto" font-size="9" fill="#fff">A</text></svg></div>
  </div>
  <div class="tray">
    <svg width="72" height="24" fill="none" stroke="#fff" stroke-width="1.300"><path d="M5.500 15l5.500-5.500 5.500 5.500"/><path d="M29.500 16.500q-2.500-4.500 3.500-8 6-2.500 7.500-.5 1 2-2.500 4.500l-2.500 2.500q-3 3-6 1.500z"/><path d="M32 11.500q1.500 3 8-2.500-3-1.500-8 2.500z" fill="#fff"/><path d="M56.500 8.500h11v7h-11zM69 10.500v3M51 9h5v3q-2.500 2-5 0zM52 9V6M55 9V6M53.500 13v4h3"/><path d="M58 10h8v4h-8z" fill="#fff" stroke="none"/></svg>
    <span class="lang">ENG</span>
    <span class="clock">5:19 PM<br>11/4/2022</span>
    <svg width="18" height="18"><path d="M1 1h16v12H8l-4 4v-4H1z" fill="#fff"/><path d="M3.500 4.500h11M3.500 7.500h11M3.500 10.500h7" stroke="#101010"/><path d="M12 16q-2-4 2-6 3 2 2 6z" fill="#101010" stroke="#fff"/></svg>
  </div>
</footer>
</body>
</html>
```

FILE: styles.css
```css
* { box-sizing: border-box; }
body { margin: 0; width: 1366px; height: 768px; overflow: hidden; background: #fbfbfb; font-family: "Open Sans", "Noto Sans", sans-serif; font-size: 12px; color: #000; display: flex; flex-direction: column; }
svg { flex: none; display: block; }
i { font-style: normal; }
.defs { position: absolute; }

/* Browser chrome */
.browser { height: 103px; background: #dadce1; border-bottom: 1px solid #b0b1b6; }
.tabstrip { height: 34px; background: #a7abb7; display: flex; }
.tabs { display: flex; align-items: center; height: 34px; }
.tabs svg { width: 100%; flex: 1 1 0; min-width: 0; height: 20px; padding: 2px 2px 2px 1px; border-right: 1px solid #6c7078; }
.tabs svg.last { border-right-color: transparent; }
.tabs-a { width: 577px; margin-left: 10px; }
.tabs-b { width: 176px; }
.active-tab { margin: 0 -9px 0 -10px; }
.tabs-c { width: 304px; }
.window-buttons { margin-left: 16px; }
.addressbar { height: 36px; display: flex; }
.omnibox { width: 1054px; height: 28px; margin-top: 4px; border-radius: 14px; background: #f6f7f9; display: flex; align-items: center; padding: 0 7px 0 13px; }
.addressbar > svg:last-child { margin-left: 10px; }
.url { flex: 1; padding-left: 11px; font-size: 13.500px; letter-spacing: -.17px; color: #202124; }
.url i { color: #70757a; }
.bookmarks { display: flex; padding: 6px 0 0 14px; height: 32px; align-items: flex-start; letter-spacing: -.15px; }
.bookmarks a { display: flex; gap: 8px; height: 16px; align-items: center; color: #26282b; white-space: nowrap; }
.bookmarks svg { width: 16px; height: 16px; }
.bookmarks .b2, .bookmarks .b5, .bookmarks .b8, .bookmarks .b9, .bookmarks .b10 { letter-spacing: -.35px; }
.bookmarks .b9 { letter-spacing: -.48px; }
.b1 { width: 87px; } .b2 { width: 154px; } .b3 { width: 82px; } .b4 { width: 71px; } .b5 { width: 148px; } .b6 { width: 86px; } .b7 { width: 76px; } .b8 { width: 148px; } .b9 { width: 154px; }
.bookmarks .b7, .bookmarks .b8 { gap: 8px; }

/* Application header */
.app-header { height: 65px; border-bottom: 1px solid #d9dbdd; display: flex; align-items: flex-start; }
.logo { margin: 14px 20px 0 16px; }
.heading { flex: 1; }
.title { font-size: 17px; line-height: 24px; margin-top: 10px; letter-spacing: -.09px; }
.menu { display: flex; align-items: center; height: 24px; margin-top: 3px; font-size: 13px; white-space: nowrap; }
.menu > span { padding-top: 1px; }
.m1 { width: 48px; } .m2 { width: 62px; } .m3 { width: 39px; } .m4 { width: 109px; } .m5 { width: 117px; } .m6 { width: 69px; }
.status { width: 364px; height: 24px; background: #f5a94c; border-radius: 3px; display: flex; align-items: center; gap: 5px; padding-left: 8px; font-size: 11.500px; letter-spacing: -.18px; color: #5d4523; }
.status span { width: 328px; }
.share { width: 134px; height: 32px; margin: 24px 4px 0 0; padding: 0 0 0 11px; border: 1px solid #ec8a16; border-radius: 2px; background: #f3931f; display: flex; align-items: center; gap: 5px; font: 600 13px "Open Sans", sans-serif; letter-spacing: -.35px; white-space: nowrap; }
.share span { padding-top: 1px; }
.sun { margin: 5px 10px 0 0; }

/* Toolbar */
.toolbar { height: 38px; border-bottom: 1px solid #d9dbdd; display: flex; align-items: center; }
.group { height: 20px; display: flex; align-items: center; border-right: 1px solid #e0e0e0; flex: none; }
.ic { width: 30px; height: 30px; }
.caret { width: 8px; height: 8px; fill: #777; }
.caret.light { fill: #aaa; }
.g1 { width: 67px; padding-left: 15px; } .g2 { width: 79px; padding-left: 14px; font-size: 13.500px; letter-spacing: -.2px; }
.g2 .caret { margin-left: 16px; } .g2 span { width: 27px; padding-top: 2px; }
.g3 { width: 73px; padding-left: 7px; } .g4 { width: 73px; padding-left: 6px; } .g5 { width: 43px; padding-left: 7px; } .g6 { width: 73px; padding-left: 6px; }
.g7 { width: 103px; padding-left: 6px; } .g8 { width: 101px; padding-left: 6px; } .g9 { width: 57px; padding-left: 5px; } .g10 { width: 45px; padding-left: 3px; border: 0; }
.g8 .caret { margin: 0 7px 0 0; } .g8 .ic + .caret:last-child { margin-right: 0; margin-left: -2px; }
.view-icons { margin-left: auto; margin-right: 13px; }

/* Workspace */
.workspace { height: 522px; display: flex; }
.sidebar { width: 213px; border-right: 1px solid #d9dbdd; }
.sidebar-scroll { height: 483px; overflow: hidden; position: relative; }
.palette { display: grid; grid-template-columns: repeat(5, 36px); grid-auto-rows: 34px; padding: 4px 0 0 10px; height: 316px; }
.palette svg { width: 36px; height: 34px; padding: 0; overflow: visible; transform: translate(18.500px, 17.500px); fill: #fff; stroke: #1c1c1c; stroke-width: 1.200; font-family: "Liberation Sans", sans-serif; }
.section { width: 202px; height: 35px; border-top: 1px solid #e2e2e2; display: flex; align-items: center; padding-left: 4px; gap: 5px; font-size: 12.300px; font-weight: 500; }
.section svg { width: 5px; height: 8px; fill: #999; }
.s1 { height: 36px; }
.side-thumb { position: absolute; right: 3px; top: 118px; width: 4px; height: 310px; border-radius: 2px; background: #dedede; }
.more-shapes { height: 39px; border-top: 1px solid #d9dbdd; color: #de6a12; font-weight: 700; display: flex; align-items: center; padding: 2px 0 0 15px; gap: 8px; font-size: 12.200px; }
.more-shapes b { font-size: 15px; line-height: 12px; }
.splitter { width: 12px; display: flex; justify-content: center; align-items: center; gap: 1px; padding-left: 1px; }
.splitter i { width: 1px; height: 6px; background: #222; }
.editor { width: 901px; border: solid #d9dbdd; border-width: 0 1px 0 1px; }
.canvas { height: 483px; padding-top: 6px; background: #f8f9fb; display: grid; grid-template-columns: 890px 9px; grid-template-rows: 468px 9px; }
.labels { font: 20.300px "Liberation Sans", sans-serif; text-anchor: middle; fill: #000; }
.v-track i { display: block; width: 4px; height: 19px; margin: 20px 0 0 3px; border-radius: 2px; background: #dadce0; }
.h-track i { display: block; width: 21px; height: 4px; margin: 3px 0 0 33px; border-radius: 2px; background: #dadce0; }
.page-tabs { height: 39px; background: #f1f3f4; border-top: 1px solid #dfe0e2; display: flex; }
.page-menu { width: 29px; border-right: 1px solid #dfe0e2; display: flex; flex-direction: column; gap: 2px; align-items: center; padding-top: 13px; }
.page-menu i { width: 3px; height: 3px; background: #777; }
.page-tab { width: 137px; background: #fff; color: #de6a12; font-size: 12.500px; font-weight: 700; text-align: center; line-height: 43px; }
.page-add { width: 30px; border: solid #dfe0e2; border-width: 0 1px; padding: 11px 0 0 8px; }

/* Format panel */
.format { width: 240px; color: #707070; overflow: hidden; }
.format b { font-weight: 700; }
.format-tabs { height: 34px; display: grid; grid-template-columns: 80px 81px 79px; text-align: center; line-height: 35px; font-size: 12.500px; }
.format-tabs b { background: #f1f3f5; border: solid #d9dbdd; border-width: 0 0 1px 1px; white-space: nowrap; }
.format-tabs .current { background: none; border: 0; line-height: 37px; }
.format-tabs .clip { text-align: left; letter-spacing: -.15px; }
.styles { display: flex; align-items: center; height: 84px; padding: 0 20px; justify-content: space-between; }
.swatches { display: grid; grid-template-columns: repeat(4, 36px); gap: 6px; margin-left: 1px; }
.swatches i { height: 24px; border: 1px solid; }
.w1 { background: #fff; color: #000; } .w2 { background: #f5f5f5; color: #666; } .w3 { background: #dae8fc; color: #6c8ebf; } .w4 { background: #d5e8d4; color: #82b366; }
.w5 { background: #ffe6cc; color: #d79b00; } .w6 { background: #fff2cc; color: #d6b656; } .w7 { background: #f8cecc; color: #b85450; } .w8 { background: #e1d5e7; color: #9673a6; }
.dots { height: 13px; display: flex; gap: 7px; padding-left: 80px; }
.dots i { width: 8px; height: 8px; border: 1px solid #b9b9b9; border-radius: 3px; margin-top: -4px; }
.dots .on { background: #84d7ff; }
.panel { border-top: 1px solid #d9dbdd; }
.row { display: flex; align-items: center; height: 22px; }
.check { width: 13px; height: 13px; border: 1px solid #767676; border-radius: 2px; background: #fff; flex: none; }
.check.on { background: #0075ff; border-color: #0075ff; }
.check.on svg { margin: -1px; width: 13px; height: 13px; fill: none; stroke: #fff; stroke-width: 2; }
.panel b, .l-grad, .l-per { margin-left: 6px; white-space: nowrap; }
.l-fill, .l-grad, .l-per { letter-spacing: -.35px; }
.l-fill { padding-top: 1px; }
.fill { height: 61px; padding: 6px 16px 0 14px; }
.fill .check { margin-top: -1px; }
.fill .second { margin-top: 2px; }
.second .check { margin-top: -1px; }
.select { margin-left: auto; width: 70px; height: 22px; border: 1px solid #999; border-radius: 3px; background: #fff; color: #000; font: 12px/20px "Liberation Sans", sans-serif; padding: 0 4px; display: flex; justify-content: space-between; align-items: center; }
.color { width: 46px; height: 22px; border: 1px solid #6b6b6b; border-radius: 3px; background: #e4e4e4; margin-left: 4px; padding: 3px; }
.color i { display: block; height: 14px; border: 1px solid #000; background: #fff2cc; }
.gold { margin-left: auto; } .gold i { background: #d6b656; }
.line { height: 88px; padding: 6px 16px 0 14px; }
.line > .row:first-child { margin-top: -1px; }
.r2 { margin-top: 6px; } .r3 { margin-top: 5px; }
.line-style { margin-left: 16px; width: 126px; height: 21px; border: 1px solid #999; border-radius: 2px; background: #fff; display: flex; align-items: center; }
.line-style i { width: 84px; margin: 0 6px; height: 1px; background: #444; }
.line-style .caret { box-sizing: content-box; padding: 6px 9px; border-left: 1px solid #999; }
.num { width: 52px; height: 21px; margin-left: auto; border: 1px solid #999; border-radius: 3px; background: #fff; color: #000; font: 12px/19px "Liberation Sans", sans-serif; text-align: right; padding-right: 2px; }
.r2 .num { margin-left: 4px; }
.spin { width: 12px; height: 20px; border: 1px solid #bbb; border-radius: 3px; background: #fff; }
.spin svg { width: 10px; height: 18px; }
.l-per { padding-left: 13px; }
.opacity { height: 33px; padding: 5px 16px 0 14px; }
.panel.opacity b { margin-left: 0; letter-spacing: -.6px; }
.opacity b { font-size: 12px; }
.panel.opacity { opacity: 1; }
.effects { height: 33px; display: flex; align-items: center; padding: 2px 0 0 16px; }
.effects .check { margin-top: -2px; }
.panel .l-sh { width: 89px; } .panel .l-sk { margin-left: 6px; letter-spacing: -.3px; }
.actions { height: 87px; padding: 10px 16px 0 14px; display: grid; grid-template-columns: 104px 104px; grid-auto-rows: 20px; gap: 2px; color: #000; font: 12px/18px "Liberation Sans", sans-serif; text-align: center; white-space: nowrap; }
.actions span { border: 1px solid #777; border-radius: 2px; background: #efefef; }
.wide { grid-column: span 2; }
.a2, .a4 { letter-spacing: -.08px; }
.props { height: 25px; border: solid #d9dbdd; border-width: 1px 0; padding: 2px; display: grid; grid-template-columns: 117px 117px; gap: 2px; color: #111; font-size: 11.500px; letter-spacing: -.1px; line-height: 19px; }
.props b { background: #e4e4e4; height: 19px; display: flex; align-items: center; gap: 4px; padding-left: 1px; }
.props b:first-child { padding-left: 5px; }

/* Taskbar */
.taskbar { height: 40px; background: #101010; display: flex; justify-content: space-between; color: #fff; }
.apps { display: flex; }
.app { width: 49px; height: 40px; display: grid; place-items: center; }
.app svg { width: 24px; height: 24px; overflow: visible; margin-top: -1px; }
.sys { width: 48px; }
.task { margin-right: 2px; }
.run { background: linear-gradient(#76b9ed, #76b9ed) center bottom / 40px 2px no-repeat; }
.current.run { background: linear-gradient(#76b9ed, #76b9ed) center bottom / 48px 2px no-repeat #333; width: 48px; }
.tray { display: flex; align-items: center; width: 224px; }
.lang { width: 32px; margin-left: 5px; font-size: 12px; letter-spacing: -.5px; }
.clock { width: 60px; text-align: center; line-height: 18px; font-size: 12px; letter-spacing: -.45px; margin: 0 13px 0 0; }
```
